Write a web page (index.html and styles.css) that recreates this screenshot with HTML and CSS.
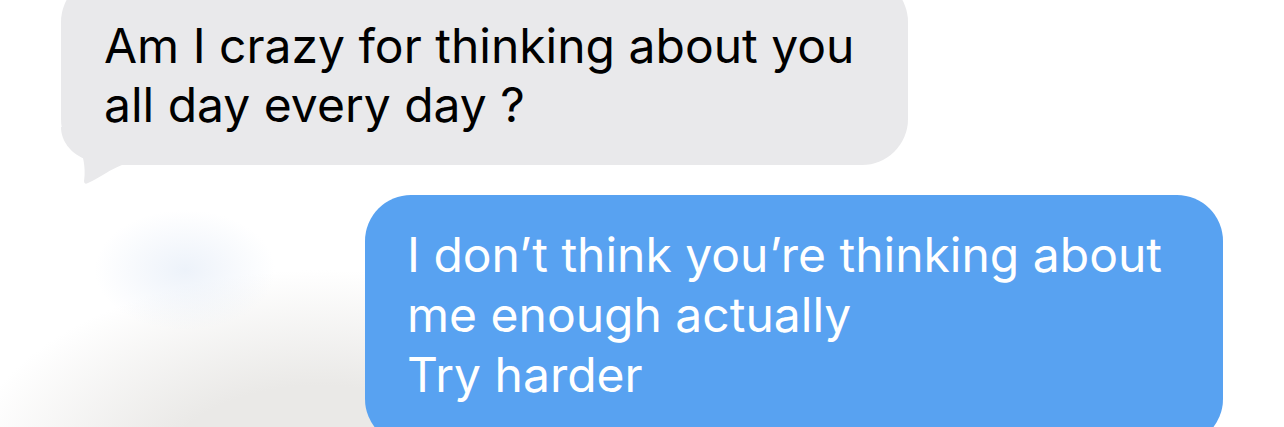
FILE: index.html
```html
<!DOCTYPE html>
<html lang="en">
<head>
    <meta charset="UTF-8">
    <meta name="viewport" content="width=device-width, initial-scale=1.0">
    <title>Messages</title>
    <link rel="stylesheet" href="styles.css">
</head>
<body>
    <div class="thread">
        <div class="bubble received">
            <svg class="tail" viewBox="0 0 62 60" width="62" height="60">
                <path d="M0 0 C0 14 10 26 22 31 C24 40 24 48 23 54 Q23 58 27 56 C40 50 50 42 61 38 L61 0 Z" fill="#e9e9eb"/>
            </svg>
            <p>Am I crazy for thinking about you<br>all day every day ?</p>
        </div>
        <div class="bubble sent">
            <p>I don’t think you’re thinking about<br>me enough actually<br>Try harder</p>
        </div>
    </div>
</body>
</html>
```
FILE: styles.css
```css
body {
    margin: 0;
    padding: 0;
    height: 427px;
    overflow: hidden;
    font-family: Inter, "Liberation Sans", Arial, sans-serif;
    background-color: #fff;
    background-image:
        radial-gradient(ellipse 90px 60px at 185px 270px, rgba(225, 234, 247, 0.6), rgba(225, 234, 247, 0)),
        radial-gradient(ellipse 360px 210px at 320px 480px, #eae9e7 45%, rgba(234, 233, 231, 0));
}

.thread {
    display: flex;
    flex-direction: column;
    margin-top: -24px;
}

.bubble {
    position: relative;
    box-sizing: border-box;
    font-size: 48px;
}

.bubble p {
    position: relative;
    margin: 0;
}

.received {
    width: 847px;
    margin-left: 61px;
    padding: 40px 40px 31px 43px;
    background: #e9e9eb;
    color: #000;
    line-height: 59px;
    border-radius: 46px;
}

.tail {
    position: absolute;
    left: 0;
    bottom: -22px;
}

.sent {
    width: 858px;
    margin-left: 365px;
    margin-top: 30px;
    padding: 30px 40px 40px 42px;
    background: #58a2f1;
    color: #fff;
    line-height: 60px;
    border-radius: 46px;
}
```
